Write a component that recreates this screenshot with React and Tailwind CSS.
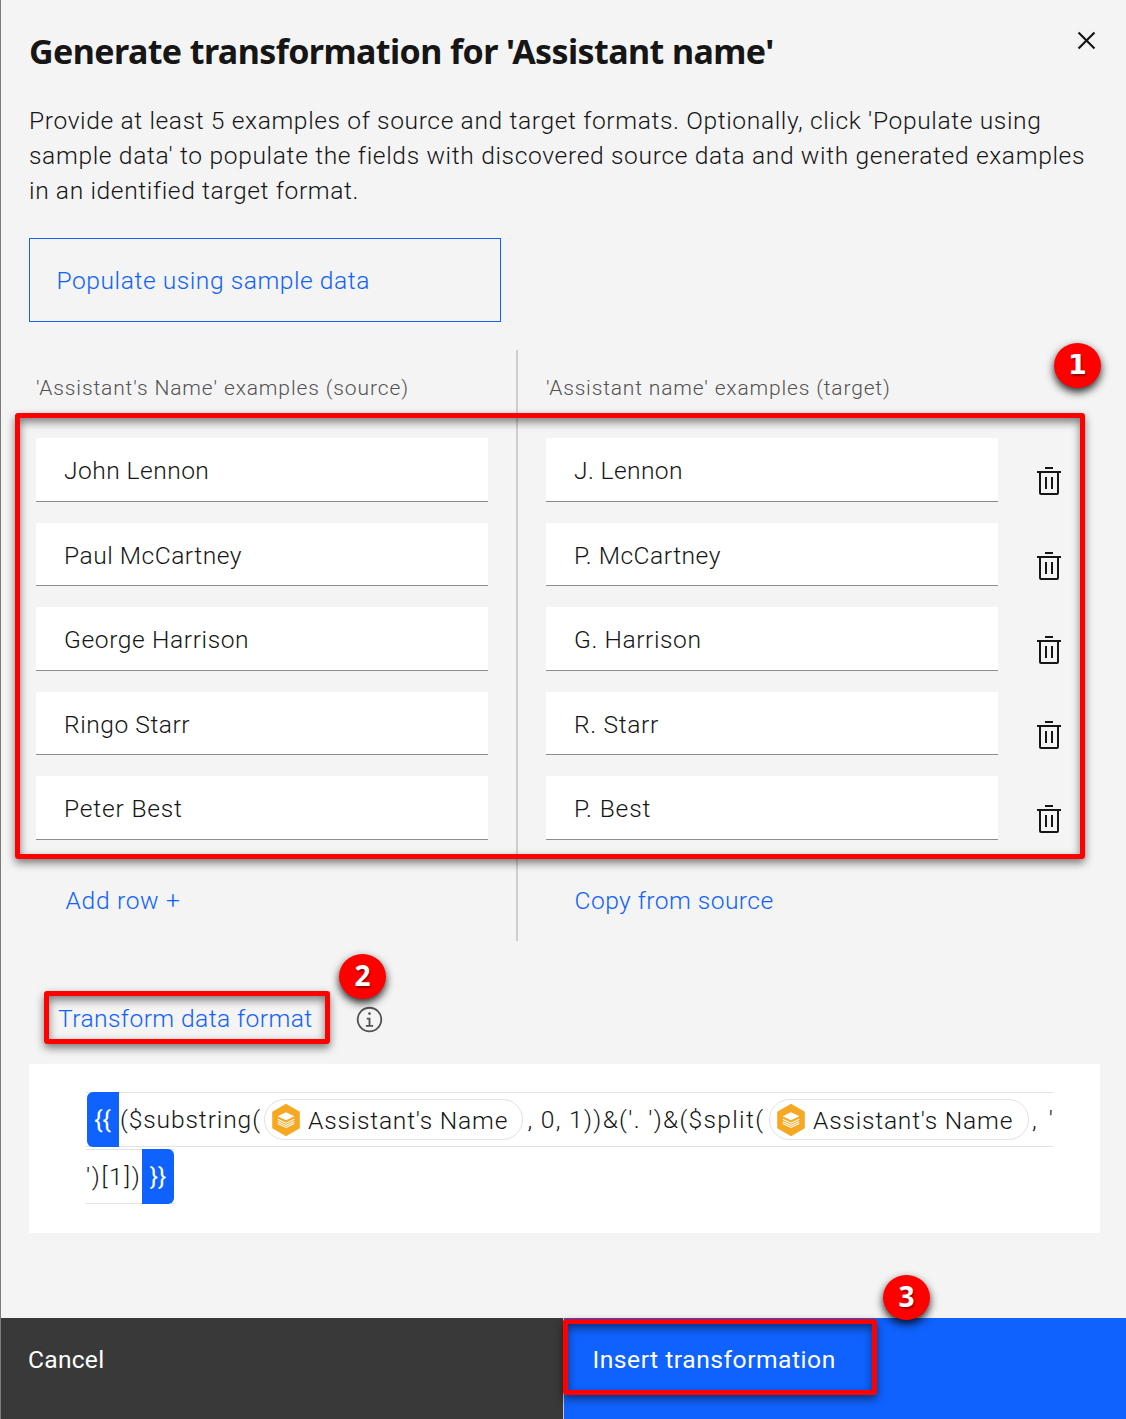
const rows = [
  { source: "John Lennon", st: "tracking-[0.45px]", target: "J. Lennon", tt: "tracking-[0.38px]" },
  { source: "Paul McCartney", st: "tracking-[0.5px]", target: "P. McCartney", tt: "tracking-[0.5px]" },
  { source: "George Harrison", st: "tracking-[0.6px]", target: "G. Harrison", tt: "tracking-[0.58px]" },
  { source: "Ringo Starr", st: "tracking-[0.53px]", target: "R. Starr", tt: "tracking-[0.65px]" },
  { source: "Peter Best", st: "tracking-[0.8px]", target: "P. Best", tt: "tracking-[0.85px]" },
];

function TrashIcon() {
  return (
    <svg className="h-8 w-8 shrink-0" viewBox="0 0 32 32" fill="#161616">
      <path d="M12 12h2v12h-2zM18 12h2v12h-2zM12 2h8v2h-8z" />
      <path d="M4 6v2h2v20a2 2 0 0 0 2 2h16a2 2 0 0 0 2-2V8h2V6zm4 22V8h16v20z" />
    </svg>
  );
}

function CloseIcon() {
  return (
    <svg className="h-[35px] w-[35px]" viewBox="0 0 32 32" fill="#161616">
      <path d="M24 9.4 22.6 8 16 14.6 9.4 8 8 9.4l6.6 6.6L8 22.6 9.4 24l6.6-6.6 6.6 6.6 1.4-1.4-6.6-6.6z" />
    </svg>
  );
}

function InfoIcon() {
  return (
    <svg className="h-[29px] w-[29px]" viewBox="0 0 32 32" fill="#525252">
      <path d="M17 22v-8h-4v2h2v6h-3v2h8v-2zM16 8a1.5 1.5 0 1 0 1.5 1.5A1.5 1.5 0 0 0 16 8z" />
      <path d="M16 30a14 14 0 1 1 14-14 14 14 0 0 1-14 14zm0-26a12 12 0 1 0 12 12A12 12 0 0 0 16 4z" />
    </svg>
  );
}

function HexIcon() {
  return (
    <svg className="h-8 w-7 shrink-0" viewBox="0 0 28 32">
      <path d="M14 .8 27 8.3v15.4l-13 7.5-13-7.5V8.3z" fill="#f7a823" stroke="#f7a823" strokeWidth="1.6" strokeLinejoin="round" />
      <path d="M14 8.3 22.4 12.3 14 16.3 5.6 12.3z" fill="#fff" />
      <path d="M5.8 15.2 14 19.2l8.2-4M5.8 17.4 14 21.4l8.2-4M5.8 19.6 14 23.4l8.2-3.8" fill="none" stroke="#fff" strokeWidth="1.1" />
    </svg>
  );
}

function Callout({ className, children }) {
  return (
    <div className={"absolute z-20 flex h-[45px] w-[47px] items-center justify-center rounded-[50%] bg-[#ff0000] pb-[3px] font-bold leading-none text-white shadow-[0_4px_8px_rgba(0,0,0,0.85)] [text-shadow:1px_2px_2px_rgba(0,0,0,0.4)] " + className}>
      {children}
    </div>
  );
}

function Highlight({ className }) {
  return (
    <div className={"pointer-events-none absolute z-10 rounded-[3px] border-[5px] border-[#ff0000] shadow-[0_4px_8px_rgba(0,0,0,0.5),inset_0_4px_8px_rgba(0,0,0,0.5)] " + className} />
  );
}

function Field({ text, tracking }) {
  return (
    <div className={"flex h-[63.5px] items-center border-b border-[#8d8d8d] bg-white pl-[28px] pt-[3px] " + tracking}>{text}</div>
  );
}

function NamePill({ className }) {
  return (
    <span className={"flex h-[41px] shrink-0 items-center rounded-full border-[1.5px] border-[#e2e2e2] bg-white " + className}>
      <HexIcon />
      <span className="ml-[8.5px] mt-[1px] tracking-[0.78px]">Assistant's Name</span>
    </span>
  );
}

export default function App() {
  return (
    <div className="relative flex h-[1419px] w-[1126px] flex-col overflow-hidden border-l border-[#7c7c7c] bg-[#f4f4f4] font-['Roboto',sans-serif] text-[24.6px] font-light leading-[35px] text-[#161616]">
      <header className="flex h-[103px] items-start justify-between pl-[28px] pr-[22.5px]">
        <h1 className="mt-[29px] whitespace-nowrap font-['Noto_Sans',sans-serif] text-[34px] font-bold leading-[44px] tracking-[-0.59px]">
          Generate transformation for 'Assistant name'
        </h1>
        <button className="mt-[23px]"><CloseIcon /></button>
      </header>

      <p className="h-[135px] whitespace-nowrap pl-[28px]">
        <span className="block tracking-[0.615px]">Provide at least 5 examples of source and target formats. Optionally, click 'Populate using</span>
        <span className="block tracking-[0.645px]">sample data' to populate the fields with discovered source data and with generated examples</span>
        <span className="block tracking-[0.61px]">in an identified target format.</span>
      </p>

      <button className="ml-[28px] flex h-[84px] w-[472px] shrink-0 items-center border border-[#0f62fe] pl-[26.5px] text-left tracking-[0.55px] text-[#0f62fe]">
        Populate using sample data
      </button>

      <section className="relative mt-[28px] flex h-[591px] shrink-0">
        <div className="flex w-[516.5px] flex-col border-r-2 border-[#cfcfcf] pl-[35px] pr-[28px]">
          <h2 className="h-[88px] whitespace-nowrap pt-[21px] text-[21px] tracking-[0.88px] text-[#525252]">'Assistant's Name' examples (source)</h2>
          <div className="flex flex-col gap-[21px]">
            {rows.map((r) => <Field key={r.source} text={r.source} tracking={r.st} />)}
          </div>
          <a className="ml-[29.5px] mt-[43.5px] tracking-[0.68px] text-[#0f62fe]">Add row +</a>
        </div>
        <div className="flex w-[480.5px] flex-col pl-[28.5px]">
          <h2 className="h-[88px] whitespace-nowrap pt-[21px] text-[21px] tracking-[0.84px] text-[#525252]">'Assistant name' examples (target)</h2>
          <div className="flex flex-col gap-[21px]">
            {rows.map((r) => <Field key={r.target} text={r.target} tracking={r.tt} />)}
          </div>
          <a className="ml-[28.5px] mt-[43.5px] tracking-[0.45px] text-[#0f62fe]">Copy from source</a>
        </div>
        <div className="flex flex-col gap-[52.5px] pl-[34.8px] pt-[115px]">
          {rows.map((r) => <TrashIcon key={r.source} />)}
        </div>
        <Highlight className="left-[14px] top-[63px] h-[446px] w-[1070px]" />
        <Callout className="left-[1053px] top-[-7px] font-['DejaVu_Sans',sans-serif] text-[27px]">1</Callout>
      </section>

      <div className="relative mt-[50px] flex h-[53px] shrink-0 items-center pl-[57px] pt-[3px]">
        <a className="w-[297px] pb-[1px] tracking-[0.42px] text-[#0f62fe]">Transform data format</a>
        <InfoIcon />
        <Highlight className="left-[43px] top-0 h-[53px] w-[286px]" />
        <Callout className="left-[338px] top-[-37px] font-['Open_Sans',sans-serif] text-[28px]">2</Callout>
      </div>

      <div className="ml-[28px] mt-[20px] flex h-[169px] w-[1071px] shrink-0 flex-col gap-[1.5px] whitespace-pre bg-white pl-[57px] pt-[28px]">
        <div className="flex h-[55px] w-[967px] items-center border-y-[1.5px] border-[#e2e2e2]">
          <span className="ml-[1px] flex h-[55px] w-[32px] shrink-0 items-center justify-center rounded-l-[6px] bg-[#0f62fe] pr-[1px] font-normal text-white">{"{{"}</span>
          <span className="w-[145px] shrink-0 pl-[1px] tracking-[0.88px]">($substring(</span>
          <NamePill className="w-[259px] pl-[6.5px]" />
          <span className="w-[245.5px] shrink-0 pl-[4.5px] tracking-[1.3px]">, 0, 1))&('. ')&($split(</span>
          <NamePill className="w-[260px] pl-[7px]" />
          <span className="pl-[3.5px] tracking-[3px]">, '</span>
        </div>
        <div className="flex h-[55px] w-[88px] items-center border-y-[1.5px] border-[#e2e2e2]">
          <span className="w-[56px] shrink-0 tracking-[1.6px]">')[1])</span>
          <span className="flex h-[55px] w-[32px] shrink-0 items-center justify-center rounded-r-[6px] bg-[#0f62fe] font-normal text-white">{"}}"}</span>
        </div>
      </div>

      <footer className="relative mt-auto flex h-[101.5px] shrink-0 font-normal text-white">
        <button className="flex w-[562px] items-start bg-[#393939] pl-[27px] pt-[24px] text-left tracking-[0.25px]">Cancel</button>
        <button className="flex flex-1 items-start border-l-[1.5px] border-[#c6c6c6] bg-[#0f62fe] pl-[28.5px] pt-[24px] text-left tracking-[0.53px]">Insert transformation</button>
        <Highlight className="left-[562px] top-[1.5px] h-[76px] w-[314px]" />
        <Callout className="left-[882px] top-[-42.5px] font-['Open_Sans',sans-serif] text-[28px]">3</Callout>
      </footer>
    </div>
  );
}
